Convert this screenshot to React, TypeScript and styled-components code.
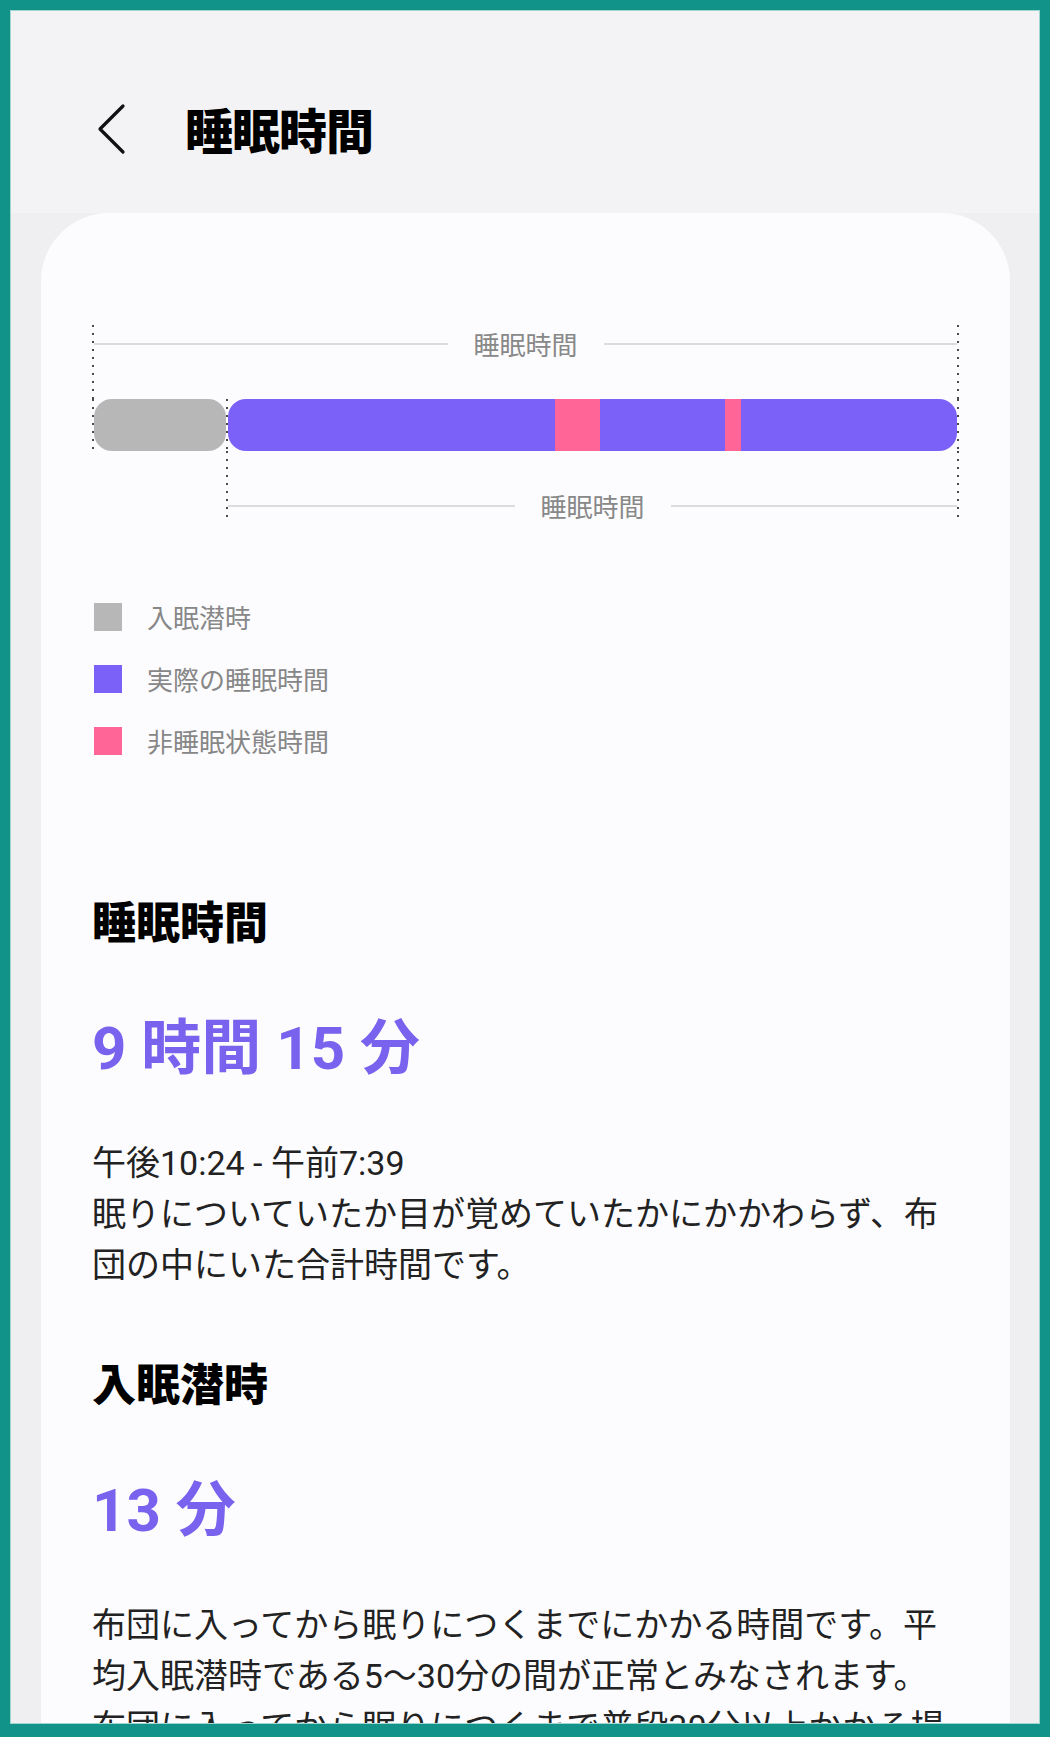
import styled, { createGlobalStyle } from 'styled-components'

const PURPLE = '#7b61f7'
const PINK = '#ff6597'
const GRAY = '#b7b7b7'
const VALUE = '#7862ee'

const GlobalStyle = createGlobalStyle`
  body {
    margin: 0;
    background: #ffffff;
    font-family: "Noto Sans CJK JP", "Noto Sans", sans-serif;
  }
  * {
    box-sizing: border-box;
  }
`

type Segment = { kind: 'asleep' | 'awake'; share: number }

// portion of the time in bed, left to right, after falling asleep
const sleepSegments: Segment[] = [
  { kind: 'asleep', share: 44.8 },
  { kind: 'awake', share: 6.2 },
  { kind: 'asleep', share: 17.2 },
  { kind: 'awake', share: 2.1 },
  { kind: 'asleep', share: 29.7 },
]

const legend = [
  { color: GRAY, label: '入眠潜時' },
  { color: PURPLE, label: '実際の睡眠時間' },
  { color: PINK, label: '非睡眠状態時間' },
]

export default function App() {
  return (
    <>
      <GlobalStyle />
      <Frame>
        <Screen>
          <Header>
            <BackButton aria-label="戻る">
              <svg width="30" height="52" viewBox="0 0 30 52" fill="none">
                <path
                  d="M27 3 L4 26 L27 49"
                  stroke="#111"
                  strokeWidth="3.2"
                  strokeLinecap="round"
                  strokeLinejoin="round"
                />
              </svg>
            </BackButton>
            <Title>睡眠時間</Title>
          </Header>

          <Card>
            <Chart>
              <TopSpan $left $right>
                <LabelRow>
                  <Rule />
                  <ChartLabel>睡眠時間</ChartLabel>
                  <Rule />
                </LabelRow>
              </TopSpan>
              <BarCell $left>
                <LatencyBar />
              </BarCell>
              <BarCell $left $right>
                <SleepBar>
                  {sleepSegments.map((s, i) => (
                    <Piece key={i} $grow={s.share} $color={s.kind === 'awake' ? PINK : PURPLE} />
                  ))}
                </SleepBar>
              </BarCell>
              <BottomSpan $left $right>
                <LabelRow>
                  <Rule />
                  <ChartLabel>睡眠時間</ChartLabel>
                  <Rule />
                </LabelRow>
              </BottomSpan>
            </Chart>

            <Legend>
              {legend.map((l) => (
                <LegendItem key={l.label}>
                  <Swatch $color={l.color} />
                  <LegendText>{l.label}</LegendText>
                </LegendItem>
              ))}
            </Legend>

            <Section $first>
              <SectionTitle>睡眠時間</SectionTitle>
              <Value>9 時間 15 分</Value>
              <Body>
                <p>午後10:24 - 午前7:39</p>
                <p>眠りについていたか目が覚めていたかにかかわらず、布団の中にいた合計時間です。</p>
              </Body>
            </Section>

            <Section>
              <SectionTitle>入眠潜時</SectionTitle>
              <Value>13 分</Value>
              <Body>
                <p>
                  布団に入ってから眠りにつくまでにかかる時間です。平均入眠潜時である5〜30分の間が正常とみなされます。布団に入ってから眠りにつくまで普段30分以上かかる場合は、睡眠習慣を見直してみましょう。
                </p>
              </Body>
            </Section>
          </Card>
        </Screen>
      </Frame>
    </>
  )
}

const Frame = styled.div`
  width: 1050px;
  height: 1737px;
  border: 10px solid #12938a;
  border-bottom-width: 13px;
  overflow: hidden;
`

const Screen = styled.div`
  height: 100%;
  border: 1px solid #9fd7d0;
  background: #efeff1;
  overflow: hidden;
`

const Header = styled.header`
  height: 202px;
  padding: 34px 0 0 85px;
  display: flex;
  align-items: center;
  background: #f3f3f5;
`

const BackButton = styled.button`
  display: flex;
  padding: 0;
  border: 0;
  background: none;
  cursor: pointer;
`

const Title = styled.h1`
  margin: 0 0 0 59px;
  font-size: 48px;
  line-height: 1.2;
  font-weight: 900;
  color: #000;
  letter-spacing: -1px;
`

const Card = styled.main`
  margin: 0 29px 0 30px;
  padding: 112px 51px 200px;
  background: #fcfcfe;
  border-radius: 68px 68px 0 0;
`

// dotted guide lines at the edges of a span, 2px dots every 8px
type Edges = { $left?: boolean; $right?: boolean }

const dots = (side: 'left' | 'right') =>
  `linear-gradient(#4a4a4a 2px, transparent 2px) ${side} top / 2px 8px repeat-y`

const edges = ({ $left, $right }: Edges) => {
  const layers = [$left && dots('left'), $right && dots('right')].filter(Boolean)
  return layers.length ? `background: ${layers.join(', ')};` : ''
}

const Chart = styled.div`
  display: grid;
  grid-template-columns: 134px 1fr;
  grid-template-rows: 74px 52px 72px;
`

const TopSpan = styled.div<Edges>`
  grid-column: 1 / -1;
  padding: 0 2px;
  ${edges}
`

const BarCell = styled.div<Edges>`
  padding: 0 ${(p) => (p.$right ? '2px' : '0')} 0 2px;
  display: flex;
  ${edges}
`

const BottomSpan = styled.div<Edges>`
  grid-column: 2;
  padding: 36px 2px 0;
  ${edges}
`

const LabelRow = styled.div`
  height: 38px;
  display: flex;
  align-items: center;
  gap: 26px;
`

const Rule = styled.div`
  flex: 1;
  height: 2px;
  background: #dcdcdc;
`

const ChartLabel = styled.span`
  font-size: 26px;
  line-height: 1;
  color: #888;
`

const LatencyBar = styled.div`
  flex: 1;
  background: ${GRAY};
  border-radius: 18px;
`

const SleepBar = styled.div`
  flex: 1;
  display: flex;
  border-radius: 18px;
  overflow: hidden;
`

const Piece = styled.div<{ $grow: number; $color: string }>`
  flex: ${(p) => p.$grow} 1 0;
  background: ${(p) => p.$color};
`

const Legend = styled.ul`
  list-style: none;
  margin: 80px 0 0 2px;
  padding: 0;
  display: flex;
  flex-direction: column;
  gap: 34px;
`

const LegendItem = styled.li`
  display: flex;
  align-items: center;
  gap: 25px;
  height: 28px;
`

const Swatch = styled.span<{ $color: string }>`
  width: 28px;
  height: 28px;
  background: ${(p) => p.$color};
`

const LegendText = styled.span`
  font-size: 26px;
  line-height: 28px;
  color: #878787;
`

const Section = styled.section<{ $first?: boolean }>`
  margin-top: ${(p) => (p.$first ? '137px' : '63px')};
`

const SectionTitle = styled.h2`
  margin: 0;
  font-size: 44px;
  line-height: 56px;
  font-weight: 900;
  color: #000;
`

const Value = styled.div`
  margin-top: 62px;
  font-family: Roboto, "Noto Sans CJK JP", sans-serif;
  font-size: 60px;
  line-height: 78px;
  font-weight: 700;
  color: ${VALUE};
`

const Body = styled.div`
  margin-top: 50px;
  font-family: Roboto, "Noto Sans CJK JP", sans-serif;
  font-size: 34px;
  line-height: 51px;
  color: #222;

  p {
    margin: 0;
  }
`
